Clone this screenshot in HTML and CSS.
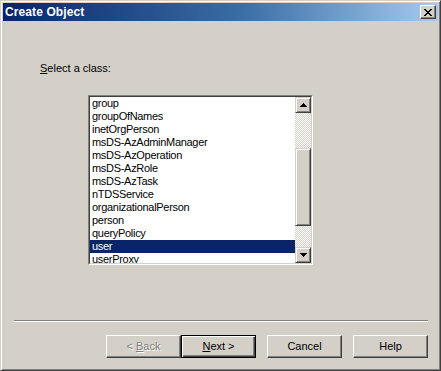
FILE: index.html
```html
<!DOCTYPE html>
<html lang="en">
<head>
  <meta charset="UTF-8">
  <meta name="viewport" content="width=device-width, initial-scale=1.0">
  <title>Create Object</title>
  <link rel="stylesheet" href="styles.css">
</head>
<body>
  <div class="window">
    <div class="titlebar">
      <span class="title">Create Object</span>
      <div class="close-btn">
        <svg width="8" height="7" viewBox="0 0 8 7" shape-rendering="crispEdges">
          <path d="M0 0h2v1H0zM6 0h2v1H6zM1 1h2v1H1zM5 1h2v1H5zM2 2h4v1H2zM3 3h2v1H3zM2 4h4v1H2zM1 5h2v1H1zM5 5h2v1H5zM0 6h2v1H0zM6 6h2v1H6z" fill="#000"/>
        </svg>
      </div>
    </div>

    <div class="content">
      <div class="prompt"><u>S</u>elect a class:</div>
      <div class="listbox">
        <div class="listbox-inner">
          <ul class="items">
            <li>group</li>
            <li>groupOfNames</li>
            <li>inetOrgPerson</li>
            <li>msDS-AzAdminManager</li>
            <li>msDS-AzOperation</li>
            <li>msDS-AzRole</li>
            <li>msDS-AzTask</li>
            <li>nTDSService</li>
            <li>organizationalPerson</li>
            <li>person</li>
            <li>queryPolicy</li>
            <li class="selected">user</li>
            <li>userProxy</li>
          </ul>
          <div class="scrollbar">
            <div class="scroll-btn">
              <svg width="7" height="4" viewBox="0 0 7 4" shape-rendering="crispEdges">
                <path d="M3 0h1v1H3zM2 1h3v1H2zM1 2h5v1H1zM0 3h7v1H0z" fill="#000"/>
              </svg>
            </div>
            <div class="track"><div class="thumb"></div></div>
            <div class="scroll-btn">
              <svg width="7" height="4" viewBox="0 0 7 4" shape-rendering="crispEdges">
                <path d="M0 0h7v1H0zM1 1h5v1H1zM2 2h3v1H2zM3 3h1v1H3z" fill="#000"/>
              </svg>
            </div>
          </div>
        </div>
      </div>
    </div>

    <div class="separator"></div>

    <div class="actions">
      <div class="btn disabled"><span>&lt; <u>B</u>ack</span></div>
      <div class="btn default"><span><u>N</u>ext &gt;</span></div>
      <div class="btn spaced"><span>Cancel</span></div>
      <div class="btn spaced"><span>Help</span></div>
    </div>
  </div>
</body>
</html>
```

FILE: styles.css
```css
* {
  box-sizing: border-box;
}

body {
  margin: 0;
  font-family: "Liberation Sans", Arial, sans-serif;
  font-size: 11px;
  color: #000;
  background: #d4d0c8;
}

.window {
  display: flex;
  flex-direction: column;
  width: 441px;
  height: 371px;
  padding: 2px;
  background: #d4d0c8;
  border: 1px solid;
  border-color: #d4d0c8 #404040 #404040 #d4d0c8;
  box-shadow: inset 1px 1px #fff, inset -1px -1px #808080;
}

/* title bar */
.titlebar {
  display: flex;
  align-items: center;
  justify-content: space-between;
  height: 18px;
  padding: 0 2px 0 2px;
  background: linear-gradient(to right, #0a246a, #3a6ea5 55%, #a6caf0);
}

.title {
  color: #fff;
  font-size: 12px;
  font-weight: bold;
  letter-spacing: 0.1px;
}

.close-btn {
  display: flex;
  align-items: center;
  justify-content: center;
  width: 16px;
  height: 14px;
  background: #d4d0c8;
  border: 1px solid;
  border-color: #fff #404040 #404040 #fff;
  box-shadow: inset -1px -1px #808080;
}

/* class picker */
.content {
  padding: 41px 0 0 37px;
}

.prompt {
  height: 13px;
  line-height: 13px;
}

.listbox {
  width: 225px;
  height: 170px;
  margin: 20px 0 0 48px;
  border: 1px solid;
  border-color: #808080 #fff #fff #808080;
}

.listbox-inner {
  display: flex;
  height: 100%;
  border: 1px solid;
  border-color: #404040 #d4d0c8 #d4d0c8 #404040;
  background: #fff;
}

.items {
  flex: 1;
  margin: 0;
  padding: 0;
  list-style: none;
  overflow: hidden;
}

.items li {
  height: 13px;
  line-height: 13px;
  padding-left: 2px;
  letter-spacing: -0.3px;
  white-space: nowrap;
}

.items li.selected {
  background: #0a246a;
  color: #fff;
}

.scrollbar {
  display: flex;
  flex-direction: column;
  width: 16px;
}

.scroll-btn {
  display: flex;
  align-items: center;
  justify-content: center;
  height: 16px;
  background: #d4d0c8;
  border: 1px solid;
  border-color: #d4d0c8 #404040 #404040 #d4d0c8;
  box-shadow: inset 1px 1px #fff, inset -1px -1px #808080;
}

.track {
  flex: 1;
  padding-top: 35px;
  background-color: #fff;
  background-image: conic-gradient(#d4d0c8 25%, #fff 0 50%, #d4d0c8 0 75%, #fff 0);
  background-size: 2px 2px;
}

.thumb {
  height: 78px;
  background: #d4d0c8;
  border: 1px solid;
  border-color: #d4d0c8 #404040 #404040 #d4d0c8;
  box-shadow: inset 1px 1px #fff, inset -1px -1px #808080;
}

/* footer */
.separator {
  margin: 55px 10px 0 11px;
  border-top: 1px solid #808080;
  border-bottom: 1px solid #fff;
}

.actions {
  display: flex;
  justify-content: flex-end;
  margin-top: 13px;
  padding-right: 10px;
}

.btn {
  display: flex;
  align-items: center;
  justify-content: center;
  width: 75px;
  height: 23px;
  padding-bottom: 1px;
  border: 1px solid;
  border-color: #fff #404040 #404040 #fff;
  box-shadow: inset -1px -1px #808080;
}

.btn.spaced {
  margin-left: 11px;
}

.btn.disabled {
  color: #808080;
  text-shadow: 1px 1px #fff;
}

.btn.default {
  border-color: #000;
  box-shadow: inset 1px 1px #fff, inset -1px -1px #404040, inset -2px -2px #808080;
}
```
